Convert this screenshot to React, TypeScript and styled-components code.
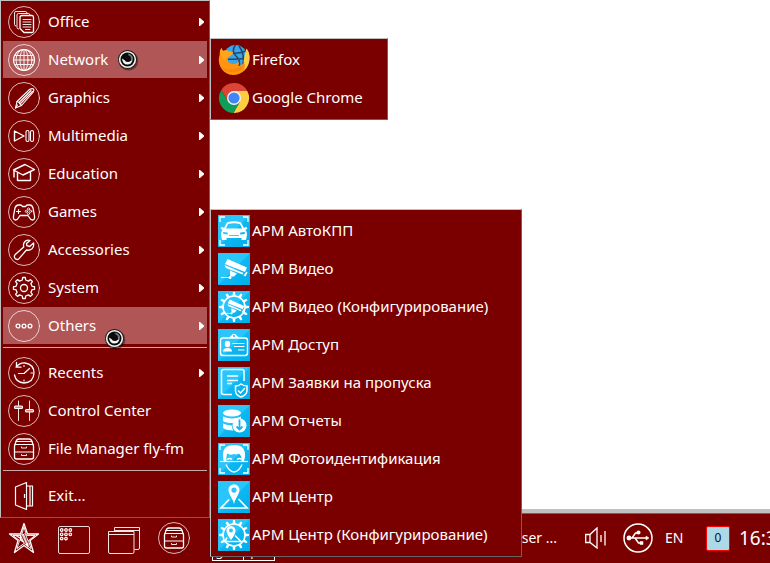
import React from "react";
import styled, { createGlobalStyle } from "styled-components";

const MAROON = "#7a0000";
const LIGHT_EDGE = "#c0c0c0";
const DARK_EDGE = "#666666";

const GlobalStyle = createGlobalStyle`
  *, *::before, *::after { box-sizing: border-box; }
  body {
    margin: 0;
    overflow: hidden;
    background: #ffffff;
    color: #ffffff;
    font: 15px/20px "Noto Sans", sans-serif;
  }
  button {
    margin: 0;
    padding: 0;
    border: 0;
    background: none;
    color: inherit;
    font: inherit;
    text-align: left;
  }
`;

const Screen = styled.div`
  position: relative;
  display: flex;
  flex-direction: column;
  height: 100vh;
`;

const Desktop = styled.main`
  flex: 1;
  background: #ffffff;
  border-bottom: 4px solid ${LIGHT_EDGE};
`;

const MenuPanel = styled.nav`
  position: absolute;
  padding: 2px;
  background: ${MAROON};
  border: 1px solid;
  border-color: ${LIGHT_EDGE} ${DARK_EDGE} ${DARK_EDGE} ${LIGHT_EDGE};
`;

const StartMenu = styled(MenuPanel)`
  left: 0;
  bottom: 45px;
  width: 210px;
`;

const NetworkMenu = styled(MenuPanel)`
  left: 210px;
  top: 38px;
  width: 178px;
`;

const OthersMenu = styled(MenuPanel)`
  left: 210px;
  bottom: 6px;
  width: 312px;
`;

const MenuItem = styled.button<{ $active?: boolean; $tight?: boolean }>`
  position: relative;
  display: flex;
  align-items: center;
  gap: ${(p) => (p.$tight ? 2 : 8)}px;
  width: 100%;
  height: 38px;
  padding: 0 3px 0 5px;
  background: ${(p) => (p.$active ? "#b05656" : "transparent")};
  background-clip: padding-box;
  border-bottom: 1px solid transparent;
  white-space: nowrap;
`;

const MenuLabel = styled.span`
  flex: 1;
  padding-bottom: 2px;
`;

const Divider = styled.hr`
  height: 1px;
  margin: 2px 0 6px;
  border: 0;
  background: #c9a9a9;
`;

const Icon = styled.svg`
  flex: none;
  display: block;
  width: 32px;
  height: 32px;
`;

const Arrow = styled.svg`
  flex: none;
  width: 5px;
  height: 9px;
`;

const EyeBadge = styled.svg<{ $x: number; $y: number }>`
  position: absolute;
  z-index: 1;
  left: ${(p) => p.$x}px;
  top: ${(p) => p.$y}px;
  width: 22px;
  height: 22px;
`;

const Taskbar = styled.footer`
  display: flex;
  align-items: center;
  height: 50px;
  padding: 0 0 1px 8px;
  background: ${MAROON};
  border-top: 1px solid ${DARK_EDGE};
  overflow: hidden;
`;

const Launchers = styled.div`
  display: flex;
  gap: 18px;
`;

const Pager = styled.div`
  display: flex;
  align-self: flex-end;
  width: 63px;
  margin: 0 0 1px 22px;
  border: 1px solid #ffffff;
`;

const Desk = styled.button`
  flex: 1;
  padding-left: 3px;
  font-size: 12px;
  line-height: 10px;

  & + & {
    border-left: 1px solid #ffffff;
  }
`;

const TaskButton = styled.button`
  flex: 1;
  text-align: right;
  font-size: 14px;
`;

const Tray = styled.div`
  display: flex;
  align-items: center;
  padding-left: 28px;
`;

const VolumeIcon = styled.svg`
  width: 22px;
  height: 22px;
  margin-right: 16px;
  display: block;
`;

const UsbIcon = styled.svg`
  width: 30px;
  height: 30px;
  margin-right: 12px;
  display: block;
`;

const Layout = styled.button`
  width: 41px;
  font-size: 14px;
`;

const Counter = styled.button`
  width: 24px;
  height: 25px;
  border: 1px solid #ff0000;
  border-radius: 2px;
  background: #add8e6;
  color: #111111;
  font-size: 12px;
  text-align: center;
`;

const Clock = styled.time`
  width: 31px;
  margin-left: 9px;
  overflow: hidden;
  white-space: nowrap;
  font-size: 19px;
  line-height: 24px;
`;

const gear = (n: number, inner: number, outer: number, w: number, cx = 16, cy = 16) => {
  const pts: string[] = [];
  const step = (Math.PI * 2) / n;
  for (let i = 0; i < n; i++) {
    const a = i * step - Math.PI / 2;
    [
      [inner, -w * 1.3],
      [outer, -w * 0.8],
      [outer, w * 0.8],
      [inner, w * 1.3],
    ].forEach(([r, d]) => {
      pts.push(`${(cx + r * Math.cos(a + d)).toFixed(2)} ${(cy + r * Math.sin(a + d)).toFixed(2)}`);
    });
  }
  return `M${pts.join("L")}Z`;
};

const Ringed = ({ children }: { children: React.ReactNode }) => (
  <Icon viewBox="0 0 32 32" fill="none" stroke="#fff" strokeWidth="1.1" strokeLinejoin="round" strokeLinecap="round" aria-hidden>
    <circle cx="16" cy="16" r="15.5" strokeWidth="0.9" opacity="0.8" />
    {children}
  </Icon>
);

const CabinetShape = () => (
  <g>
    <path d="M6.5 13 8 8.5Q8.800 6 11 6H21Q23.200 6 24 8.500L25.500 13V24Q25.500 26 23.500 26H8.500Q6.500 26 6.500 24Z" strokeWidth="1.3" />
    <path d="M8 8.500H24M7 11.500H25M7 19H25" />
    <path d="M13.500 14V15H18.500V14M13.500 21.500V22.500H18.500V21.500" strokeWidth="0.9" />
  </g>
);

const icons = {
  office: (
    <Ringed>
      <path d="M8 20Q6.500 20 6.500 18.500V7Q6.500 5.500 8 5.500H17.500Q19 5.500 19 7M10.500 23Q9 23 9 21.500V9Q9 7.500 10.500 7.500H20.500Q22 7.500 22 9" strokeWidth="0.9" />
      <path d="M12 11.500Q12 9.500 14 9.500H24Q25.500 9.500 25.500 11.500V25Q25.500 26.500 24 26.500H16L12 22.500Z" strokeWidth="1.3" />
      <path d="M15 13.500H23M15 16H23M15 18.500H23M15 21H23M17.500 23.500H22" strokeWidth="0.9" />
    </Ringed>
  ),
  network: (
    <Ringed>
      <circle cx="16" cy="16" r="10.500" />
      <ellipse cx="16" cy="16" rx="4" ry="10.500" strokeWidth="0.9" />
      <ellipse cx="16" cy="16" rx="8" ry="10.500" strokeWidth="0.9" />
      <path d="M16 5.500V26.500M5.500 16H26.500M7 11.500H25M7 20.500H25" strokeWidth="0.9" />
    </Ringed>
  ),
  graphics: (
    <Ringed>
      <path d="M7.500 26 9 19.500 21.500 7.500Q24 6 25.500 7Q26.500 8.500 24.500 11L13.500 23.500Z" />
      <path d="M9 19.500 11 20.500 12 22 13.500 23.500M11 20.500 23 8.500M12 22 24.500 9.500M7.500 26 9.500 23" />
    </Ringed>
  ),
  multimedia: (
    <Ringed>
      <path d="M6.500 11V21L16 16Z" strokeWidth="1.4" />
      <rect x="18" y="10.500" width="3" height="11" rx="1.500" />
      <rect x="22.500" y="10.500" width="3" height="11" rx="1.500" />
    </Ringed>
  ),
  education: (
    <Ringed>
      <path d="M5.500 12 17 6.500 26.500 11.500 15 17ZM9.500 15V22.500H22.500V14.500M6 12.500V19" strokeWidth="1.400" />
    </Ringed>
  ),
  games: (
    <Ringed>
      <path d="M10.500 9H13L14.500 10.500H17.500L19 9H22Q24 9 25 12L26.500 20Q27 24 24.500 24Q22.500 24 21 21L20 19.500H12L11 21Q9.500 24 7.500 24Q5 24 5.500 20L7 12Q8 9 10.500 9Z" strokeWidth="1.300" />
      <path d="M8.500 15.500H12.500M10.500 13.500V17.500" />
      <circle cx="20.500" cy="13" r="1.100" strokeWidth="0.800" />
      <circle cx="20.500" cy="17.500" r="1.100" strokeWidth="0.800" />
      <circle cx="18.300" cy="15.300" r="1.100" strokeWidth="0.800" />
      <circle cx="22.700" cy="15.300" r="1.100" strokeWidth="0.800" />
    </Ringed>
  ),
  accessories: (
    <Ringed>
      <path d="M22 6.500Q18.500 5.500 16.500 8Q15 10 15.700 13L7 20.800Q5.700 22.500 7 24.500Q9 26.300 11 24.700L18.500 16Q21.500 16.800 24 14.800Q26.300 12.800 25.500 9L21.700 12.500 18.800 11.700 18.500 9.500Z" strokeWidth="1.300" />
    </Ringed>
  ),
  system: (
    <Ringed>
      <path d={gear(8, 8.2, 10.6, 0.16)} strokeWidth="1.300" />
      <circle cx="16" cy="16" r="3.500" strokeWidth="1.300" />
    </Ringed>
  ),
  others: (
    <Ringed>
      {[10, 16, 22].map((x) => (
        <circle key={x} cx={x} cy="16" r="1.900" strokeWidth="1.300" />
      ))}
    </Ringed>
  ),
  recents: (
    <Ringed>
      <path d="M8 10Q12 5.500 17 6Q26 7.500 26 16Q25.500 25.500 16 26Q8 25.500 6.500 18M8.500 5.500V10.200H13" strokeWidth="1.300" />
      <path d="M10.500 16.500H16L21.500 11.500M16 8.500V9.500M16 23V24M23 16H24.500" strokeWidth="1.200" />
    </Ringed>
  ),
  control: (
    <Ringed>
      <path d="M10.500 6V25.500M21.500 6V25.500" strokeWidth="0.900" />
      <rect x="6.500" y="11" width="8" height="2.500" rx="1" fill="#c88" />
      <rect x="17.500" y="14.500" width="8" height="2.500" rx="1" fill="#c88" />
    </Ringed>
  ),
  files: (
    <Ringed>
      <CabinetShape />
    </Ringed>
  ),
  exit: (
    <Icon viewBox="0 0 32 32" fill="none" stroke="#fff" strokeWidth="1.200" strokeLinejoin="round" aria-hidden>
      <path d="M7.500 7 18.500 2.500V29.500L7.500 25ZM18.500 6H24.500V26H18.500M22 6V26M16.500 14V18" />
    </Icon>
  ),
};

const Tile = ({ children }: { children: React.ReactNode }) => (
  <Icon viewBox="0 0 32 32" fill="#fff" stroke="none" aria-hidden>
    <defs>
      <linearGradient id="tile" x1="0" y1="0" x2="1" y2="1">
        <stop offset="0.480" stopColor="#2ac6fb" />
        <stop offset="0.520" stopColor="#0db7f2" />
        <stop offset="1" stopColor="#00aeea" />
      </linearGradient>
    </defs>
    <rect width="32" height="32" fill="url(#tile)" />
    {children}
  </Icon>
);

const Corners = () => (
  <path d="M2 7V2H7M25 2H30V7M30 25V30H25M7 30H2V25" fill="none" stroke="#fff" strokeWidth="1.300" />
);

const CameraShape = () => (
  <g>
    <path d="M9.500 6 29 14.500 27 19 7 11ZM6.500 12 25.500 20 24.500 21.500 8 15ZM12 17.500 19 20.500 16 23.500H12.500Z" />
    <path d="M3 24.500H12.500V18" fill="none" stroke="#fff" />
    <circle cx="12" cy="24.500" r="1.500" />
    <path d="M28.500 18.500 29.500 19.500 27.500 23.500 25.500 22.500Z" />
  </g>
);

const PinShape = () => (
  <g>
    <path fillRule="evenodd" d="M16 3.500C12.500 3.500 10.500 6 10.500 9C10.500 13 14.500 17 16 23C17.500 17 21.500 13 21.500 9C21.500 6 19.500 3.500 16 3.500ZM16 6.500A2.600 2.600 0 1 1 16 11.700A2.600 2.600 0 1 1 16 6.500Z" />
    <path d="M11 18.500 3 27H29L20.500 18" fill="none" stroke="#fff" strokeWidth="1.700" />
  </g>
);

const Cog = () => (
  <g>
    <circle cx="16" cy="16" r="11" fill="none" stroke="#fff" strokeWidth="1.600" />
    {Array.from({ length: 12 }, (_, i) => (
      <path key={i} d="M14.500 5 15 1H17L17.500 5Z" transform={`rotate(${i * 30} 16 16)`} />
    ))}
  </g>
);

const tiles = {
  firefox: (
    <Icon viewBox="0 0 32 32" aria-hidden>
      <circle cx="17.500" cy="12.500" r="11.500" fill="#3aa5e8" />
      <path d="M17.500 1Q13 7 18 12Q23 16 21 24M8 8Q17 11 28 7M7 15Q18 16 29 14M21 2Q27 10 25 21" fill="none" stroke="#22466e" strokeWidth="1.500" />
      <path d="M28.500 4.500Q32 9 31.500 15Q31 22 27 26Q22 31 15 31Q7 30.500 3 24Q-.500 18 1.500 11.500Q1.500 6.500 3.500 4Q4 6 5.500 7Q8 5.500 11 7.500Q14 7.500 15 8.500Q15 10.500 12 12Q12 14 10 14Q9 19 14 20Q18 20.500 20.500 18Q22 20 19.500 22Q25 22 27 16Q29 11 28.500 4.500Z" fill="#ff9410" />
      <path d="M28.500 4.500Q32 9 31.500 15Q31 22 26 26Q28 20 25.500 18Q26.500 10 28.500 4.500Z" fill="#ffcf48" />
      <path d="M3.500 4Q4 6 5.500 7Q8 5.500 11 7.500Q14 7.500 15 8.500Q15 10.500 12 12Q8 13 7 17Q3 12 2 10Q1.500 6 3.500 4Z" fill="#ffa51c" />
      <path d="M3 23Q10 28 20 24Q24 23 26.500 20Q24 27 17 28Q8 29 3 23Z" fill="#fb850a" />
    </Icon>
  ),
  chrome: (
    <Icon viewBox="0 0 32 32" aria-hidden>
      <path d="M29.270 9H16L9.940 19.500 3.300 8A15 15 0 0 1 29.270 9Z" fill="#dc4437" />
      <path d="M29.270 9A15 15 0 0 1 15.430 31L22.060 19.500 16 9Z" fill="#ffcd40" />
      <path d="M15.430 31A15 15 0 0 1 3.300 8L9.940 19.500 22.060 19.500Z" fill="#109d58" />
      <circle cx="16" cy="16" r="7" fill="#f3f3f3" />
      <circle cx="16" cy="16" r="5.600" fill="#4285f4" />
    </Icon>
  ),
  car: (
    <Tile>
      <Corners />
      <path fillRule="evenodd" d="M9 7.500Q16 5 23 7.500L26 13 28 11.800 29.500 13.500 27.500 15Q29.500 17 29 20L28 25H23.500V23H8.500V25H4L3 20Q2.500 17 4.500 15L2.500 13.500 4 11.800 6 13ZM10 9 8 13.500H24L22 9Q16 7.500 10 9ZM5 17 5.500 19 10 19.500 9.500 17.500ZM27 17 22.500 17.500 22 19.500 26.500 19ZM11 20V20.800H21V20Z" />
    </Tile>
  ),
  camera: (
    <Tile>
      <CameraShape />
    </Tile>
  ),
  cameraConfig: (
    <Tile>
      <Cog />
      <g transform="translate(4.500 4) scale(0.750)">
        <CameraShape />
      </g>
    </Tile>
  ),
  access: (
    <Tile>
      <rect x="2.500" y="9" width="27" height="17.500" rx="2.500" fill="none" stroke="#fff" strokeWidth="1.400" />
      <path d="M10 9 13 7Q16 2.500 19 7L22 9Z" />
      <circle cx="16" cy="7" r="1" fill="#14b8f0" />
      <ellipse cx="9.500" cy="15" rx="2.700" ry="3.200" />
      <path d="M5 22.500Q5 19 9.500 19Q14 19 14 22.500Z" />
      <path d="M14.500 14.500H26.500M16 17.500H26.500M20 21H26.500" stroke="#fff" strokeWidth="1" />
    </Tile>
  ),
  requests: (
    <Tile>
      <path d="M14 27.500H5.500Q3.500 27.500 3.500 25.500V4.500Q3.500 2.500 5.500 2.500H24Q26 2.500 26 4.500V14M9 9H20M9 13.500H20M9 16.500H14" fill="none" stroke="#fff" strokeWidth="1.500" />
      <path d="M23 17Q26 19 29 19V24Q28.500 28 23 30Q17.500 28 17.500 24V19Q20.500 19 23 17ZM20 23.500 22.500 26 27 21" fill="none" stroke="#fff" strokeWidth="1.500" />
    </Tile>
  ),
  reports: (
    <Tile>
      <ellipse cx="14" cy="8" rx="9" ry="3.500" />
      <path d="M5 11.500Q14 15.500 23 11.500V14Q17 14.500 15 18Q8 18 5 16ZM5 18.500Q9 20.500 14 20.500Q13.500 23 15.500 25.500Q8 25.500 5 23Z" />
      <circle cx="21.500" cy="20.500" r="7" />
      <path d="M21.500 14.500V24M18.500 21.500 21.500 24.500 24.500 21.500" fill="none" stroke="#14b8f0" strokeWidth="1.800" />
    </Tile>
  ),
  face: (
    <Tile>
      <Corners />
      <path d="M5.500 17.500Q3 4 12 2.500Q28 0 27 14L26 18H23.500Q24 12 20.500 10.500Q19 12 16 11Q12 12.500 9 10.500Q8 15 8.500 18H6Z" />
      <path d="M2 18.500H30" stroke="#fff" strokeWidth="1.200" />
      <path d="M9 16.500Q12 14.500 14 16.500M19 16.500Q21 14.500 24 16.500M8 21.500Q11 28.500 16 29Q21 28.500 24 21.500" fill="none" stroke="#fff" strokeWidth="1.400" />
    </Tile>
  ),
  pin: (
    <Tile>
      <PinShape />
    </Tile>
  ),
  pinConfig: (
    <Tile>
      <Cog />
      <path fillRule="evenodd" d="M13 7Q8.500 7.500 8.500 12Q9 16 13 21Q17 16 17.500 12Q17.500 7.500 13 7ZM13 9.500A2 2 0 1 1 13 13.500A2 2 0 1 1 13 9.500Z" />
      <path d="M9 18.500 7 22.500H23L17 16.500" fill="none" stroke="#fff" strokeWidth="1.500" />
    </Tile>
  ),
};

const Eye = ({ x, y }: { x: number; y: number }) => (
  <EyeBadge $x={x} $y={y} viewBox="0 0 22 22" aria-hidden>
    <circle cx="11.500" cy="11.800" r="9.800" fill="#000" opacity="0.400" />
    <circle cx="10.500" cy="10.500" r="9.500" fill="#1c1c1c" />
    <circle cx="10.500" cy="10.500" r="8.600" fill="#f4f4f4" />
    <circle cx="10.500" cy="10.500" r="7" fill="#0c0c0c" />
    <path d="M11 4.500Q16 5.500 16 10Q15.500 12 14 12L12 8Z" fill="#777" />
    <path d="M5 9.500Q5.500 15.500 10.500 15.500Q14.500 15.500 15.500 11Q14 12.500 11 12Q7.500 11.500 5 9.500Z" fill="#f4f4f4" />
    <circle cx="10.800" cy="9.800" r="3.200" fill="#0c0c0c" />
  </EyeBadge>
);

type Entry = { label: string; icon: React.ReactNode; submenu?: boolean; active?: boolean; eye?: [number, number] };

const groups: Entry[][] = [
  [
    { label: "Office", icon: icons.office, submenu: true },
    { label: "Network", icon: icons.network, submenu: true, active: true, eye: [114, 8] },
    { label: "Graphics", icon: icons.graphics, submenu: true },
    { label: "Multimedia", icon: icons.multimedia, submenu: true },
    { label: "Education", icon: icons.education, submenu: true },
    { label: "Games", icon: icons.games, submenu: true },
    { label: "Accessories", icon: icons.accessories, submenu: true },
    { label: "System", icon: icons.system, submenu: true },
    { label: "Others", icon: icons.others, submenu: true, active: true, eye: [101, 21] },
  ],
  [
    { label: "Recents", icon: icons.recents, submenu: true },
    { label: "Control Center", icon: icons.control },
    { label: "File Manager fly-fm", icon: icons.files },
  ],
  [{ label: "Exit...", icon: icons.exit }],
];

const networkItems: Entry[] = [
  { label: "Firefox", icon: tiles.firefox },
  { label: "Google Chrome", icon: tiles.chrome },
];

const otherItems: Entry[] = [
  { label: "АРМ АвтоКПП", icon: tiles.car },
  { label: "АРМ Видео", icon: tiles.camera },
  { label: "АРМ Видео (Конфигурирование)", icon: tiles.cameraConfig },
  { label: "АРМ Доступ", icon: tiles.access },
  { label: "АРМ Заявки на пропуска", icon: tiles.requests },
  { label: "АРМ Отчеты", icon: tiles.reports },
  { label: "АРМ Фотоидентификация", icon: tiles.face },
  { label: "АРМ Центр", icon: tiles.pin },
  { label: "АРМ Центр (Конфигурирование)", icon: tiles.pinConfig },
];

const Item = ({ entry, tight }: { entry: Entry; tight?: boolean }) => (
  <MenuItem type="button" $active={entry.active} $tight={tight}>
    {entry.icon}
    <MenuLabel>{entry.label}</MenuLabel>
    {entry.submenu && (
      <Arrow viewBox="0 0 5 9" fill="#fff" aria-hidden>
        <path d="M0 1H1L5 4.500V5.500L1 9H0Z" />
      </Arrow>
    )}
    {entry.eye && <Eye x={entry.eye[0]} y={entry.eye[1]} />}
  </MenuItem>
);

export default function App() {
  return (
    <>
      <GlobalStyle />
      <Screen>
        <Desktop />
        <Taskbar>
          <Launchers>
            <button type="button" aria-label="Start menu">
              <Icon viewBox="0 0 32 32" fill="none" stroke="#fff" strokeWidth="1.300" strokeLinejoin="round">
                <path d="M16 1.500 19.500 12H30.500L22 18.500 25.500 30.500 16 23.500 6.500 30.500 10 18.500 1.500 12H12.500Z" />
                <path d="M16 5 18.500 13.500H27L20.500 18.500 23 26.500 16 21.500 9 26.500 11.500 18.500 5 13.500H13.500Z" strokeWidth="0.900" />
                <path d="M12.500 14 12.500 18 17 21 20 24 19.500 18 17 12 14 13ZM8 13.500 12 16" fill="#fff" fillOpacity="0.800" />
                <path d="M13.500 13 17.500 22M16.500 12 20 21" stroke={MAROON} strokeWidth="0.800" />
              </Icon>
            </button>
            <button type="button" aria-label="Show desktop">
              <Icon viewBox="0 0 32 32" fill="none" stroke="#fff">
                <rect x="0.500" y="4.500" width="31" height="27" rx="1.500" opacity="0.850" />
                {[8, 12.3, 16.6].map((y, row) =>
                  (row === 2 ? [3.7, 8] : [3.7, 8, 12.3]).map((x) => (
                    <circle key={`${x}-${y}`} cx={x} cy={y} r="1.300" strokeWidth="1.200" />
                  ))
                )}
              </Icon>
            </button>
            <button type="button" aria-label="Switch windows">
              <Icon viewBox="0 0 32 32" fill="none" stroke="#fff" opacity="0.900">
                <path d="M6.500 9V5.500H31.500V26Q31.500 27.500 30 27.500H26.500M6.500 8.500H31.500" />
                <path d="M.500 9.500H26V30Q26 31.500 24.500 31.500H2Q.500 31.500 .500 30ZM.500 12.500H26" />
              </Icon>
            </button>
            <button type="button" aria-label="File manager">{icons.files}</button>
          </Launchers>
          <Pager>
            <Desk type="button">3</Desk>
            <Desk type="button">4</Desk>
          </Pager>
          <TaskButton type="button">ser ...</TaskButton>
          <Tray>
            <VolumeIcon viewBox="0 0 22 22" fill="none" stroke="#fff" strokeWidth="1.300" role="img" aria-label="Volume">
              <path d="M.700 7.500H5L12 1V21L5 15.500H.700ZM5 7.500V15.500M16 8V15M20 4V18.500" />
            </VolumeIcon>
            <UsbIcon viewBox="0 0 30 30" fill="none" stroke="#fff" strokeWidth="1.500" role="img" aria-label="USB devices">
              <circle cx="15" cy="15" r="14" />
              <path d="M5 15H24M9 15 12.500 10H15M12 15 15.500 20H18" />
              <circle cx="6" cy="15" r="1.700" fill="#fff" />
              <circle cx="15.500" cy="9.500" r="1.300" fill="#fff" />
              <path d="M23 13 26 15 23 17ZM17 18.500H20V21.500H17Z" fill="#fff" strokeWidth="0.500" />
            </UsbIcon>
            <Layout type="button">EN</Layout>
            <Counter type="button">0</Counter>
            <Clock>16:3</Clock>
          </Tray>
        </Taskbar>

        <StartMenu aria-label="Start menu">
          {groups.map((group, i) => (
            <React.Fragment key={i}>
              {i > 0 && <Divider />}
              {group.map((entry) => (
                <Item key={entry.label} entry={entry} />
              ))}
            </React.Fragment>
          ))}
        </StartMenu>
        <NetworkMenu aria-label="Network">
          {networkItems.map((entry) => (
            <Item key={entry.label} entry={entry} tight />
          ))}
        </NetworkMenu>
        <OthersMenu aria-label="Others">
          {otherItems.map((entry) => (
            <Item key={entry.label} entry={entry} tight />
          ))}
        </OthersMenu>
      </Screen>
    </>
  );
}
